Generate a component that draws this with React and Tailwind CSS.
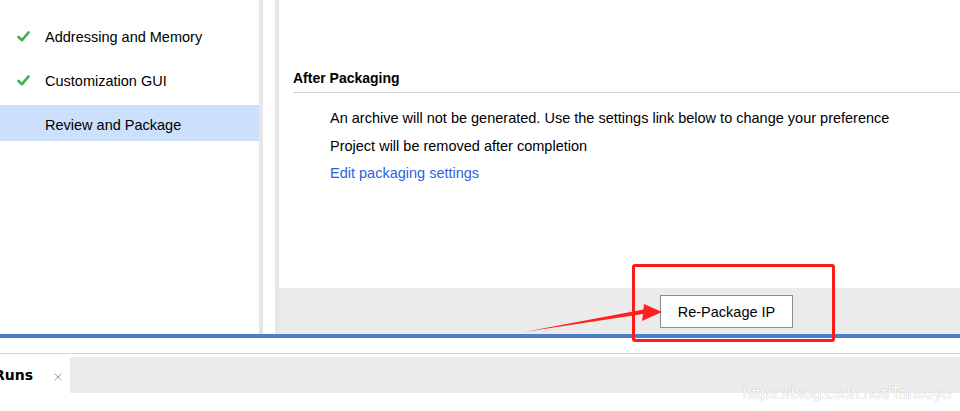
import React from 'react';
import { X } from 'lucide-react';

const steps = [
  { label: 'Addressing and Memory', done: true },
  { label: 'Customization GUI', done: true },
  { label: 'Review and Package', done: false, active: true },
];

const Check = () => (
  <svg width="13" height="11" viewBox="0 0 13 11">
    <path d="M1.5 6 L5 9.2 L11.5 1.5" fill="none" stroke="#3daf4f" strokeWidth="2.6" strokeLinecap="round" strokeLinejoin="round" />
  </svg>
);

const App = () => {
  return (
    <div className="relative w-[960px] h-[411px] overflow-hidden bg-white text-[14.5px] text-black" style={{ fontFamily: '"Liberation Sans", Arial, sans-serif' }}>
      {/* upper wizard area */}
      <div className="flex h-[334px]">
        <div className="w-[259px] bg-white pt-[17px]">
          {steps.map((s) => (
            <div
              key={s.label}
              className={`flex items-center h-[36px] mb-[8px] ${s.active ? 'bg-[#cce0fb]' : ''}`}
            >
              <div className="w-[45px] pl-[17px] flex items-center mt-[3px]">{s.done && <Check />}</div>
              <span className="mt-[6px]">{s.label}</span>
            </div>
          ))}
        </div>
        <div className="w-[4px] bg-[#e6e6e6]" />
        <div className="w-[12px] bg-white" />
        <div className="w-[4px] bg-[#e6e6e6]" />
        <div className="flex-1 flex flex-col">
          <div className="flex-1 bg-white pl-[14px] pt-[68px]">
            <div className="font-bold pb-[3px] border-b border-[#d2d2d2] text-[14px]">After Packaging</div>
            <div className="pl-[37px] pt-[12px] flex flex-col leading-[27.5px]">
              <div>An archive will not be generated. Use the settings link below to change your preference</div>
              <div>Project will be removed after completion</div>
              <div className="text-[#2b63e0]">Edit packaging settings</div>
            </div>
          </div>
          <div className="h-[46px] bg-[#ebebeb] flex items-center pl-[381px]">
            <button className="w-[133px] h-[33px] bg-white border border-[#8c8c8c] pt-[4px]">Re-Package IP</button>
          </div>
        </div>
      </div>
      <div className="h-[4px] bg-[#4a7fd0]" />
      <div className="h-[16px] bg-white border-b border-[#d4d4d4]" />
      <div className="h-[3px] bg-white" />
      <div className="h-[36px] bg-[#ebebeb] flex">
        <div className="w-[70px] bg-white flex items-center">
          <span className="ml-[-6px] font-bold text-[14px]" style={{ fontFamily: '"DejaVu Sans", Tahoma, sans-serif' }}>Runs</span>
          <X size={12} strokeWidth={1.5} className="ml-[19px] mt-[3px] text-[#7a7a7a]" />
        </div>
      </div>

      {/* annotation overlay */}
      <div className="absolute left-[632px] top-[264px] w-[203px] h-[78px] border-[3px] border-[#ff1a1a] rounded-[3px]" />
      <svg className="absolute left-0 top-0" width="960" height="411" viewBox="0 0 960 411">
        <path d="M524 332 L643 314 L642 321 L662 312 L644 304 L643.5 309.5 Z" fill="#ff2020" />
      </svg>
      <div className="absolute left-[743px] top-[382px] text-[16px] text-white" style={{ textShadow: '0 0 1px rgba(0,0,0,0.35)', fontFamily: '"Liberation Sans", Arial, sans-serif' }}>
        https://blog.csdn.net/Taneeyo
      </div>
    </div>
  );
};

export default App;
